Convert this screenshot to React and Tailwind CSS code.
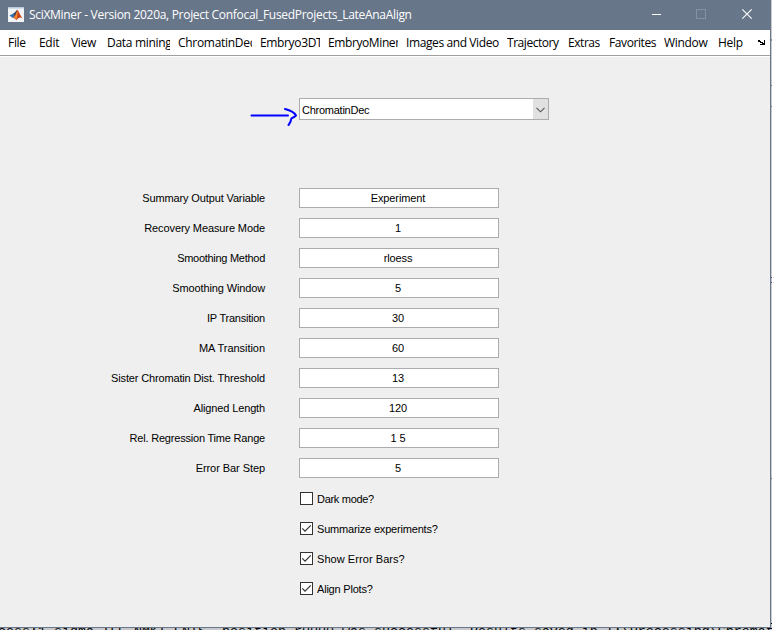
const MENU = [
  { label: 'File', box: 'w-[31px]', ls: 'tracking-[-0.3px]' },
  { label: 'Edit', box: 'w-[32px]', ls: 'tracking-[-0.3px]' },
  { label: 'View', box: 'w-[36px]', ls: 'tracking-[-0.3px]' },
  { label: 'Data mining', box: 'w-[63px] mr-2', ls: 'tracking-[-0.3px]' },
  { label: 'ChromatinDec', box: 'w-[74px] mr-2', ls: 'tracking-[-0.3px]' },
  { label: 'Embryo3DT', box: 'w-[60px] mr-2', ls: 'tracking-[-0.35px]' },
  { label: 'EmbryoMiner', box: 'w-[70px] mr-2', ls: 'tracking-[-0.4px]' },
  { label: 'Images and Video', box: 'w-[94px] mr-[7px]', ls: 'tracking-[-0.4px]' },
  { label: 'Trajectory', box: 'w-[61px]', ls: 'tracking-[-0.45px]' },
  { label: 'Extras', box: 'w-[41px]', ls: 'tracking-[-0.45px]' },
  { label: 'Favorites', box: 'w-[55px]', ls: 'tracking-[-0.4px]' },
  { label: 'Window', box: 'w-[54px]', ls: 'tracking-[-0.3px]' },
  { label: 'Help', box: 'w-[39px]', ls: 'tracking-[-0.3px]' },
];

const FIELDS = [
  ['Summary Output Variable', 'Experiment', 'tracking-[-0.13px]'],
  ['Recovery Measure Mode', '1', 'tracking-[-0.1px]'],
  ['Smoothing Method', 'rloess', 'tracking-[-0.28px]'],
  ['Smoothing Window', '5', 'tracking-[-0.13px]'],
  ['IP Transition', '30', 'tracking-[-0.23px]'],
  ['MA Transition', '60', 'tracking-[-0.05px]'],
  ['Sister Chromatin Dist. Threshold', '13', 'tracking-[-0.15px]'],
  ['Aligned Length', '120', 'tracking-[-0.14px]'],
  ['Rel. Regression Time Range', '1 5', 'tracking-[-0.2px]'],
  ['Error Bar Step', '5', 'tracking-[-0.07px]'],
];

const CHECKS = [
  ['Dark mode?', false, 'tracking-[-0.3px]'],
  ['Summarize experiments?', true, 'tracking-[-0.18px]'],
  ['Show Error Bars?', true, 'tracking-[0.06px]'],
  ['Align Plots?', true, 'tracking-[-0.2px]'],
];

function MatlabIcon() {
  return (
    <svg width="16" height="15" viewBox="0 0 16 15" className="-mt-px shrink-0">
      <rect width="16" height="15" fill="#f1f4f7" />
      <rect width="16" height="1.5" fill="#b9cbdc" />
      <path d="M1.5 8.6 5 6.8 7 8.6 4.8 11 Z" fill="#2a6fae" />
      <path d="M5 6.8 C7 6 8 3.4 9.4 2.8 L8.3 8.5 6.8 9 Z" fill="#30465e" />
      <path d="M9.4 2.8 C10.6 3.8 12 8 14.5 11.4 C12 9.8 11 10.2 8.2 13.2 C7.4 11.6 6.2 10.8 4.6 11 C7 10 8.2 5.4 9.4 2.8Z" fill="#c8401c" />
      <path d="M9.4 3 C9.8 5.5 10 8 8.4 12.4 C7.6 11.4 6.8 11 6 10.8 C7.8 9 8.4 6 9.4 3Z" fill="#ef8a2c" />
    </svg>
  );
}

function TitleBar() {
  return (
    <div className="flex h-[30px] items-center bg-[#68768a] pl-2 text-white">
      <MatlabIcon />
      <span className="ml-[5px] flex-1 whitespace-nowrap font-['Open_Sans',sans-serif] text-[12px] leading-[30px] tracking-[-0.3px]">
        SciXMiner - Version 2020a, Project Confocal_FusedProjects_LateAnaAlign
      </span>
      <svg width="110" height="30" viewBox="0 0 110 30" fill="none" className="mr-2 shrink-0">
        <path d="M-1 14.5H9" stroke="#fff" />
        <rect x="44.5" y="9.5" width="9" height="9" stroke="#8592a3" />
        <path d="M90.3 9.3 99.7 18.7M99.7 9.3 90.3 18.7" stroke="#fff" strokeWidth="1.1" />
      </svg>
    </div>
  );
}

function MenuBar() {
  return (
    <div className="flex h-[27px] border-b border-white bg-white">
      <div className="flex w-full border-b border-[#a0a0a0] pl-2 font-['Open_Sans',sans-serif] text-[12px] leading-[26px] text-black">
        {MENU.map((m) => (
          <span key={m.label} className={`shrink-0 overflow-hidden whitespace-nowrap ${m.box} ${m.ls}`}>
            {m.label}
          </span>
        ))}
        <svg width="9" height="7" viewBox="0 0 9 7" className="mt-[10px] ml-px" shapeRendering="crispEdges">
          <path d="M0 0h2v1h1v1h2v1h1V0h1v5H2V4h2V3H2V2H0Z" fill="#000" />
        </svg>
      </div>
    </div>
  );
}

function Box({ checked }) {
  return (
    <svg width="13" height="13" viewBox="0 0 13 13" fill="none" className="shrink-0">
      <rect x="0.5" y="0.5" width="12" height="12" fill="#fff" stroke="#333" />
      {checked && <path d="M2.3 6.4 5 9.2 10.8 3.3" stroke="#333" strokeWidth="1.2" />}
    </svg>
  );
}

export default function App() {
  return (
    <div className="flex h-[630px] w-[772px] flex-col overflow-hidden bg-[#c9c9c9]">
      <div className="flex h-[628px]">
        <div className="flex w-[771px] flex-col border-r border-b border-[#68788c] bg-[#efefef] font-['Liberation_Sans',Arial,sans-serif] text-[11px] text-black">
          <TitleBar />
          <MenuBar />
          <div className="mt-[41px] flex h-[22px] pl-[250px]">
            <svg width="49" height="30" viewBox="0 0 49 30" fill="none" className="shrink-0" stroke="#0000ff" strokeWidth="2" strokeLinecap="round" strokeLinejoin="round">
              <path d="M1.5 17.5H38" />
              <path d="M35 11C39 12 44 13.5 46 17.5C44.5 20 41 19 41 21.5C41 24 39.5 25 38.5 27" />
            </svg>
            <div className="flex h-[22px] w-[250px] border border-[#ababb0] bg-white">
              <span className="flex-1 pl-[2px] leading-[22px] tracking-[-0.25px]">ChromatinDec</span>
              <div className="flex w-[15px] items-center justify-center bg-[#e1e1e1]">
                <svg width="9" height="6" viewBox="0 0 9 6" fill="none" className="mt-px mr-px">
                  <path d="M0.5 0.8 4.5 4.8 8.5 0.8" stroke="#555" strokeWidth="1.1" />
                </svg>
              </div>
            </div>
          </div>
          <div className="mt-[68px] flex flex-col gap-[10px]">
            {FIELDS.map(([label, value, ls]) => (
              <div key={label} className="flex h-5">
                <span className={`mr-[34px] w-[265px] text-right leading-[21px] ${ls}`}>{label}</span>
                <span className="w-[200px] border border-[#ababb0] bg-white pr-[2px] text-center leading-[19px] tracking-[-0.1px]">{value}</span>
              </div>
            ))}
          </div>
          <div className="mt-[10px] flex flex-col gap-[10px] pl-[300px]">
            {CHECKS.map(([label, checked, ls]) => (
              <div key={label} className="flex h-5 items-center gap-1 leading-5">
                <Box checked={checked} />
                <span className={`pt-px ${ls}`}>{label}</span>
              </div>
            ))}
          </div>
        </div>
        <div className="flex w-px flex-col bg-[#c6c8ca]">
          <div className="h-[39px]" />
          <div className="h-[2px] bg-[#888c90]" />
          <div className="h-[44px]" />
          <div className="h-px bg-[#70747a]" />
          <div className="h-[20px]" />
          <div className="h-px bg-[#777]" />
          <div className="h-[170px]" />
          <div className="h-px bg-[#7a2aa0]" />
          <div className="h-[4px]" />
          <div className="h-px bg-[#7a2aa0]" />
          <div className="h-[195px]" />
          <div className="h-px bg-[#777b80]" />
          <div className="h-[144px]" />
          <div className="h-px bg-black" />
        </div>
      </div>
      <div className="h-[2px] overflow-hidden whitespace-pre font-['Liberation_Mono',monospace] text-[13.33px] text-black">
        <div className="-mt-[4px] -ml-[2px] leading-[15px]">
          {'cess:1 sigma TLE NMKI ENTS, position r0000 was successful. Results saved in I:\\Processing\\Chromatin'}
        </div>
      </div>
    </div>
  );
}
